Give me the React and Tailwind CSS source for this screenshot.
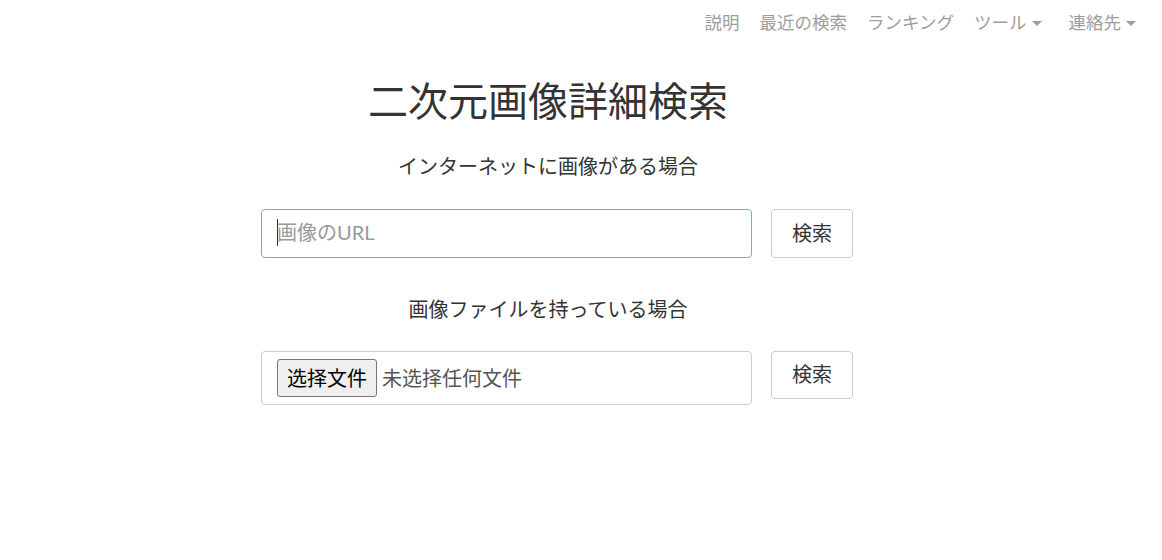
import React from 'react';

const font = { fontFamily: 'Lato, "Noto Sans CJK JP", sans-serif' };

const Caret = () => (
  <span className="inline-block ml-[5px] w-0 h-0 border-x-[5px] border-x-transparent border-t-[5px] border-t-[#9d9d9d] align-middle" />
);

const App = () => {
  return (
    <div className="min-h-[560px] bg-white text-[#333]" style={font}>
      {/* Navbar */}
      <nav className="flex justify-end items-center h-[46px] pr-[26px] text-[17.5px] text-[#9d9d9d]">
        <a className="mr-[20px]">説明</a>
        <a className="mr-[20px]">最近の検索</a>
        <a className="mr-[20px]">ランキング</a>
        <a className="mr-[27px] flex items-center">ツール<Caret /></a>
        <a className="flex items-center">連絡先<Caret /></a>
      </nav>

      <main className="pl-[261px]">
        <div className="w-[574px] text-center">
          <h1 className="mt-[33px] text-[40px] leading-[44px] font-normal">二次元画像詳細検索</h1>
          <p className="mt-[29px] text-[20px] leading-[28px]">インターネットに画像がある場合</p>
        </div>

        <div className="mt-[29px] flex gap-[19px]">
          <div className="relative">
            <input
              type="text"
              placeholder="画像のURL"
              className="w-[491px] h-[49px] px-[15px] pb-[3px] text-[20px] border border-[#66afe9] rounded-[4px] outline-none placeholder:text-[#999]"
            />
            <span className="absolute left-[16px] top-[10px] w-px h-[27px] bg-[#333]" />
          </div>
          <button className="w-[82px] h-[49px] pb-[2px] text-[20px] border border-[#ccc] rounded-[4px] bg-white">検索</button>
        </div>

        <div className="w-[574px] text-center">
          <p className="mt-[37px] text-[20px] leading-[28px]">画像ファイルを持っている場合</p>
        </div>

        <div className="mt-[28px] flex gap-[19px] items-start">
          <div className="w-[491px] h-[54px] pl-[15px] flex items-center border border-[#ccc] rounded-[4px]">
            <span className="h-[38px] w-[100px] flex items-center justify-center bg-[#efefef] border border-[#767676] rounded-[3px] text-[20px] text-black">选择文件</span>
            <span className="ml-[5px] text-[20px] text-[#555]">未选择任何文件</span>
          </div>
          <button className="w-[82px] h-[48px] pb-[2px] text-[20px] border border-[#ccc] rounded-[4px] bg-white">検索</button>
        </div>
      </main>
    </div>
  );
};

export default App;
